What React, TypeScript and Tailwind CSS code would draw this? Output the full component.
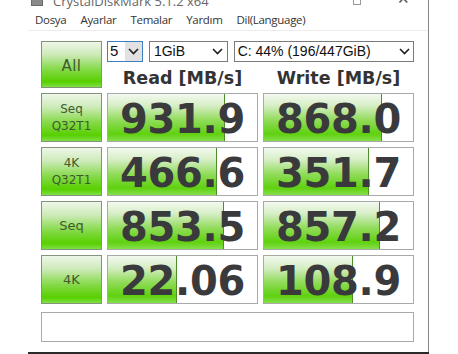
import React from 'react';

type Row = {
  label: string[];
  read: string;
  readPct: number;
  write: string;
  writePct: number;
};

const rows: Row[] = [
  { label: ['Seq', 'Q32T1'], read: '931.9', readPct: 78.5, write: '868.0', writePct: 79 },
  { label: ['4K', 'Q32T1'], read: '466.6', readPct: 73, write: '351.7', writePct: 70.5 },
  { label: ['Seq'], read: '853.5', readPct: 78, write: '857.2', writePct: 78 },
  { label: ['4K'], read: '22.06', readPct: 46, write: '108.9', writePct: 60 },
];

const greenBtn =
  'border border-[#85937c] bg-[linear-gradient(to_bottom,#eef6e9_0%,#cdeab8_28%,#86da4a_60%,#58d000_88%,#7ee046_100%)] text-[#3f5a30] flex flex-col items-center justify-center';

function Chevron() {
  return (
    <svg width="11" height="7" viewBox="0 0 11 7" className="shrink-0">
      <polyline points="1,1 5.5,5.5 10,1" fill="none" stroke="#1e1e1e" strokeWidth="1.6" />
    </svg>
  );
}

function Cell({ value, pct }: { value: string; pct: number }) {
  return (
    <div className="relative border border-[#a9a9a9] bg-white overflow-hidden">
      <div
        className="absolute left-0 top-0 bottom-0 border-r border-[#4e8c2c] bg-[linear-gradient(to_bottom,#f3f9ef_0%,#d6eec6_25%,#92dc5c_55%,#5fd10e_85%,#86df4c_100%)]"
        style={{ width: `${pct}%` }}
      />
      <div className="relative h-full flex items-center justify-center pt-[3px] text-[40px] leading-none font-bold text-[#3a3a3c] tracking-[-0.3px] [font-family:'DejaVu_Sans',sans-serif]">
        {value}
      </div>
    </div>
  );
}

export default function App() {
  return (
    <div className="w-[458px] h-[354px] bg-white overflow-hidden [font-family:'Liberation_Sans',Arial,sans-serif]">
      <div className="ml-[28px] w-[401px] h-[352px] border-r border-[#858585] flex flex-col">
        {/* title bar, cut off at the top */}
        <div className="h-[9px] overflow-hidden flex items-end pl-[3px] pr-[18px] text-[#666]">
          <div className="w-[12px] h-[7px] bg-[#8a8a8a] border border-[#6a6a6a] mb-[3px]" />
          <span className="ml-[10px] text-[13px] leading-none mb-[1px] [font-family:'Open_Sans',sans-serif]">
            CrystalDiskMark 5.1.2 x64
          </span>
          <div className="flex-1" />
          <div className="w-[8px] h-[6px] border border-[#999] border-t-0 mb-[4px]" />
          <span className="ml-[36px] text-[15px] leading-none mb-[3px] text-[#555]">✕</span>
        </div>
        {/* menu */}
        <div className="h-[22px] flex items-center gap-[14px] pl-[7px] border-b border-[#ececec] text-[11.5px] text-[#333] tracking-[-0.3px] [font-family:'Open_Sans',sans-serif]">
          <span>Dosya</span>
          <span>Ayarlar</span>
          <span>Temalar</span>
          <span>Yardım</span>
          <span>Dil(Language)</span>
        </div>

        <div className="pl-[13px] pt-[10px]">
          <div className="grid grid-cols-[61px_151px_151px] grid-rows-[21px_21px_repeat(4,49px)] gap-x-[5px] gap-y-[5px]">
            <div className={`${greenBtn} row-span-2 text-[15px] tracking-[0.5px] pt-[3px] [font-family:'DejaVu_Sans',sans-serif]`}>
              All
            </div>
            <div className="col-span-2 flex gap-[6px] text-[14px] text-[#111]">
              <div className="w-[36px] h-[21px] border border-[#3d7fc0] flex items-stretch bg-white">
                <span className="pl-[2px] flex items-center text-[15px]">5</span>
                <div className="ml-auto w-[17px] bg-[#e1e1e1] flex items-center justify-center">
                  <Chevron />
                </div>
              </div>
              <div className="w-[79px] h-[21px] border border-[#7a7a7a] bg-white flex items-center pl-[4px] pr-[4px]">
                <span>1GiB</span>
                <span className="ml-auto">
                  <Chevron />
                </span>
              </div>
              <div className="w-[181px] h-[21px] border border-[#7a7a7a] bg-white flex items-center pl-[3px] pr-[3px]">
                <span>C: 44% (196/447GiB)</span>
                <span className="ml-auto">
                  <Chevron />
                </span>
              </div>
            </div>
            <div className="flex items-center justify-center text-[17.5px] font-bold text-[#333] pt-[1px] [font-family:'DejaVu_Sans',sans-serif]">
              Read [MB/s]
            </div>
            <div className="flex items-center justify-center text-[17.5px] font-bold text-[#333] pt-[1px] [font-family:'DejaVu_Sans',sans-serif]">
              Write [MB/s]
            </div>

            {rows.map((r) => (
              <React.Fragment key={r.read}>
                <div
                  className={`${greenBtn} ${r.label.length > 1 ? 'text-[12px] leading-[17px]' : 'text-[13px]'} pt-[1px] [font-family:'DejaVu_Sans',sans-serif]`}
                >
                  {r.label.map((t) => (
                    <span key={t}>{t}</span>
                  ))}
                </div>
                <Cell value={r.read} pct={r.readPct} />
                <Cell value={r.write} pct={r.writePct} />
              </React.Fragment>
            ))}
          </div>
          <div className="mt-[8px] w-[373px] h-[30px] border border-[#a9a9a9] bg-white" />
        </div>
      </div>
      <div className="ml-[28px] w-[401px] h-[2px] bg-[#2a2a2a]" />
    </div>
  );
}
